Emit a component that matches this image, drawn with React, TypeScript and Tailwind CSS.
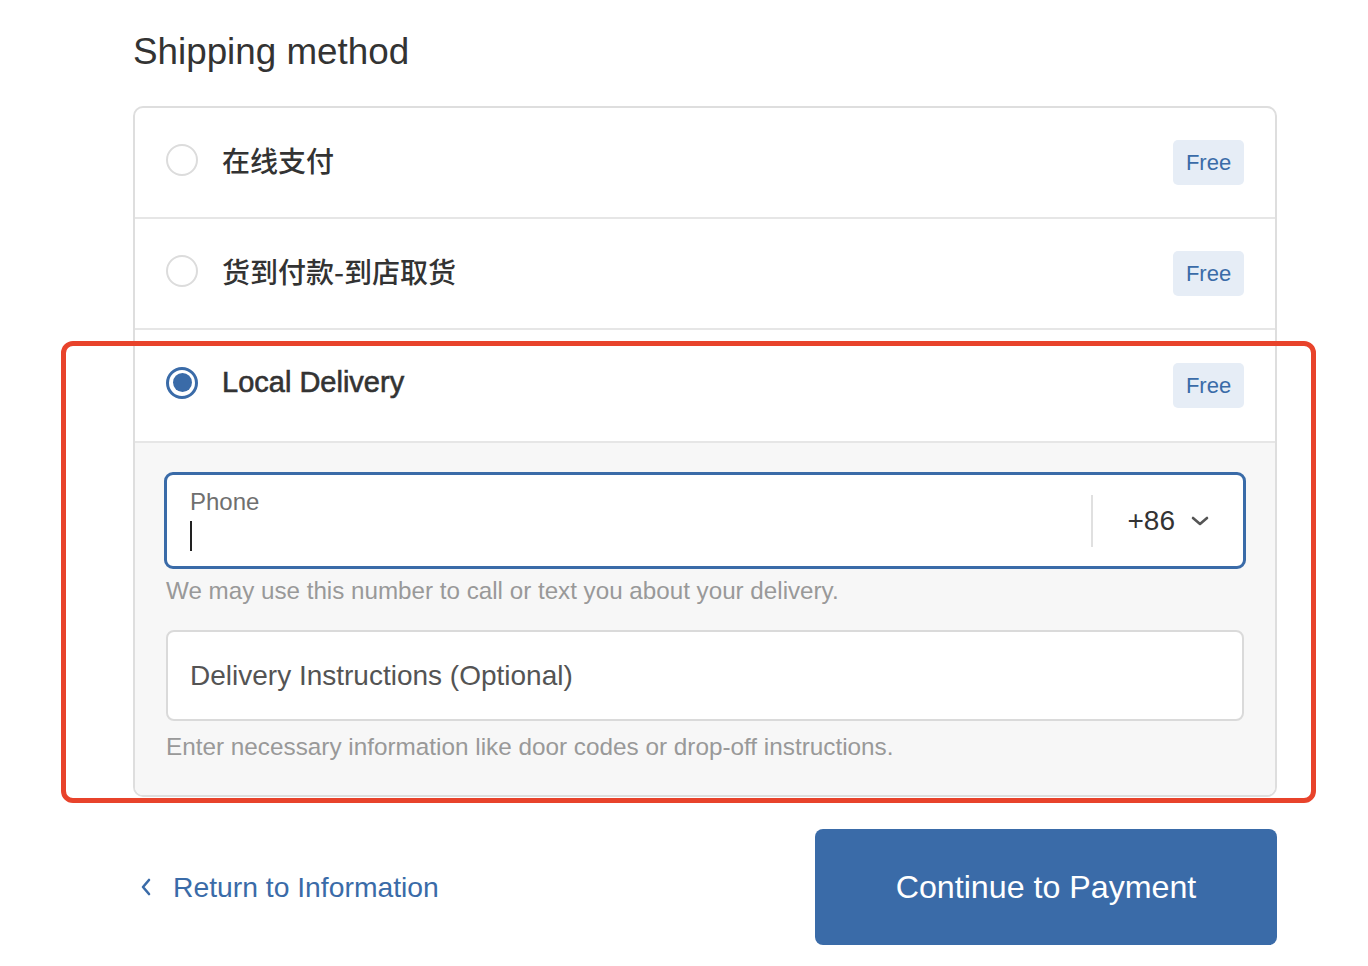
// App.tsx
type Method = {
  label: string;
  cjk?: boolean;
  selected?: boolean;
};

const methods: Method[] = [
  { label: "在线支付", cjk: true },
  { label: "货到付款-到店取货", cjk: true },
  { label: "Local Delivery", selected: true },
];

function Radio({ selected }: { selected?: boolean }) {
  if (selected) {
    return (
      <span className="flex h-[32px] w-[32px] shrink-0 items-center justify-center rounded-full border-[3px] border-[#3a6ba8] bg-white">
        <span className="h-[19px] w-[19px] rounded-full bg-[#3a6ba8]" />
      </span>
    );
  }
  return <span className="h-[32px] w-[32px] shrink-0 rounded-full border-2 border-[#dcdcdc] bg-white" />;
}

function MethodRow({ method, last }: { method: Method; last: boolean }) {
  return (
    <div
      className={`flex h-[111px] items-center px-[31px] ${last ? "" : "border-b-2 border-[#e6e6e6]"}`}
    >
      {/* radio y texto quedan un poco más arriba que la etiqueta */}
      <div className="flex items-center pb-[6px]">
        <Radio selected={method.selected} />
        <span
          className={
            method.cjk
              ? "ml-[24px] text-[28px] font-medium text-[#333] [font-family:'Noto_Sans_CJK_SC','Liberation_Sans',sans-serif]"
              : "ml-[24px] text-[29px] text-[#333] [-webkit-text-stroke:0.6px_#333]"
          }
        >
          {method.label}
        </span>
      </div>
      <span className="ml-auto flex h-[45px] w-[71px] items-center justify-center rounded-[5px] bg-[#e6edf6] text-[22px] text-[#3a6ba8]">
        Free
      </span>
    </div>
  );
}

export default function App() {
  return (
    <div className="relative min-h-[966px] bg-white pl-[133px] pt-[30px] [font-family:'Liberation_Sans',Arial,sans-serif]">
      <div className="w-[1144px]">
        <h2 className="text-[36.8px] leading-[43px] text-[#333]">Shipping method</h2>

        {/* Tarjeta de métodos */}
        <div className="mt-[33px] overflow-hidden rounded-[10px] border-2 border-[#dedede] bg-white">
          {methods.map((m, i) => (
            <MethodRow key={m.label} method={m} last={i === methods.length - 1} />
          ))}

          {/* Datos de entrega local */}
          <div className="border-t-2 border-[#e6e6e6] bg-[#f7f7f7] px-[31px] pb-[34px] pt-[29px]">
            <div className="-mx-[2px] flex h-[97px] items-center rounded-[9px] border-[3px] border-[#3a6ba8] bg-white">
              <div className="flex flex-1 flex-col pl-[23px]">
                <span className="-mt-[3px] text-[24px] leading-[28px] text-[#6f6f6f]">Phone</span>
                <span className="mt-[5px] h-[30px] w-[2px] bg-[#222]" />
              </div>
              <span className="h-[52px] w-[2px] bg-[#e0e0e0]" />
              <div className="flex items-center pl-[35px] pr-[34px]">
                <span className="text-[28px] text-[#333]">+86</span>
                <svg
                  className="ml-[16px]"
                  width="18"
                  height="12"
                  viewBox="0 0 18 12"
                  fill="none"
                  stroke="#555"
                  strokeWidth="2.6"
                  strokeLinecap="round"
                  strokeLinejoin="round"
                >
                  <path d="M2 3l7 6 7-6" />
                </svg>
              </div>
            </div>
            <p className="mt-[8px] text-[24.2px] leading-[28px] text-[#999]">
              We may use this number to call or text you about your delivery.
            </p>

            <div className="mt-[25px] flex h-[91px] items-center rounded-[8px] border-2 border-[#dadada] bg-white pl-[22px]">
              <span className="text-[28px] text-[#545454]">Delivery Instructions (Optional)</span>
            </div>
            <p className="mt-[12px] text-[24.3px] leading-[28px] text-[#999]">
              Enter necessary information like door codes or drop-off instructions.
            </p>
          </div>
        </div>

        {/* Pie */}
        <div className="mt-[32px] flex items-center justify-between">
          <a href="#" className="flex items-center pl-[6px] text-[28.3px] text-[#3a6ba8]">
            <svg
              width="14"
              height="20"
              viewBox="0 0 14 20"
              fill="none"
              stroke="#3a6ba8"
              strokeWidth="2.6"
              strokeLinecap="round"
              strokeLinejoin="round"
            >
              <path d="M10 3L4 10l6 7" />
            </svg>
            <span className="ml-[20px]">Return to Information</span>
          </a>
          <button className="flex h-[116px] w-[462px] items-center justify-center rounded-[8px] bg-[#3a6ba8] text-[32.2px] text-white">
            Continue to Payment
          </button>
        </div>
      </div>

      {/* Marco rojo de anotación */}
      <div className="pointer-events-none absolute left-[61px] top-[341px] h-[462px] w-[1255px] rounded-[12px] border-[5px] border-[#e8432b]" />
    </div>
  );
}
